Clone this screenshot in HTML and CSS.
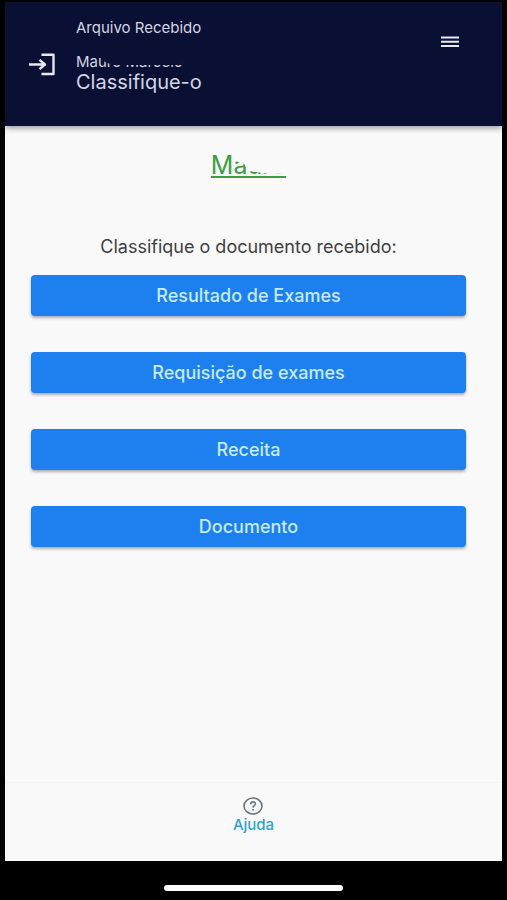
FILE: index.html
```html
<!DOCTYPE html>
<html lang="pt-BR">
<head>
<meta charset="utf-8">
<meta name="viewport" content="width=device-width, initial-scale=1">
<title>Arquivo Recebido</title>
<link rel="stylesheet" href="styles.css">
</head>
<body>
<div class="screen">
  <header class="topbar">
    <button class="icon-button" type="button" aria-label="Sair">
      <svg width="28" height="24" viewBox="0 0 28 24" fill="none" stroke="currentColor" stroke-width="2.400" stroke-linejoin="round"><path d="M1 12.500H16M11.500 7.800L17 12.500L11.500 17.200M13.500 2.800H25.500V22H13.500"/></svg>
    </button>
    <div class="heading">
      <p class="overline">Arquivo Recebido</p>
      <p class="owner">Mauro Marcelo</p>
      <h1 class="title">Classifique-o</h1>
    </div>
    <button class="icon-button menu" type="button" aria-label="Menu">
      <svg width="18" height="12" viewBox="0 0 18 12" fill="none" stroke="currentColor" stroke-width="2"><path d="M0 1.500H18M0 5.700H18M0 10H18"/></svg>
    </button>
  </header>
  <main class="content">
    <a class="patient" href="#paciente">Mauro</a>
    <p class="prompt">Classifique o documento recebido:</p>
    <div class="choices">
      <button class="choice" type="button">Resultado de Exames</button>
      <button class="choice" type="button">Requisição de exames</button>
      <button class="choice" type="button">Receita</button>
      <button class="choice" type="button">Documento</button>
    </div>
  </main>
  <footer class="bottombar">
    <a class="help" href="#ajuda">
      <svg width="20" height="18" viewBox="0 0 20 18" fill="none" stroke="currentColor" stroke-width="1.600"><ellipse cx="10" cy="9" rx="9" ry="8"/><path d="M7.700 7.200C7.700 4.100 12.500 4.200 12.400 7C12.300 8.600 10 8.800 10 10.700M10 12V13.500"/></svg>
      <span>Ajuda</span>
    </a>
  </footer>
</div>
<div class="home"><span class="home-indicator"></span></div>
</body>
</html>
```

FILE: styles.css
```css
* {
  box-sizing: border-box;
}

body {
  margin: 0;
  min-height: 100vh;
  padding: 2px 5px 0;
  display: flex;
  flex-direction: column;
  background: #000;
  font-family: Inter, "Liberation Sans", sans-serif;
}

p,
h1 {
  margin: 0;
}

.screen {
  flex: 1;
  display: flex;
  flex-direction: column;
  background: #f9f9f9;
}

.topbar {
  display: flex;
  align-items: flex-start;
  padding: 16px 43px 32px 20px;
  background: #0a1033;
  color: #d3d5e3;
  box-shadow: 0 2px 6px rgba(0, 0, 0, 0.4);
}

.icon-button {
  display: flex;
  margin: 34px 0 0;
  padding: 0 3px;
  border: 0;
  background: none;
  color: #e6e9f5;
}

.icon-button.menu {
  margin-top: 18px;
  padding: 0;
}

.heading {
  flex: 1;
  padding-left: 17px;
}

.overline,
.owner {
  font-size: 15px;
  line-height: 20px;
}

.owner {
  position: relative;
  width: fit-content;
  margin-top: 16px;
  line-height: 16px;
}

/* Hides most of the person's name */
.owner::after,
.patient::after {
  content: "";
  position: absolute;
  inset: 0;
}

.owner::after {
  background: #0a1033;
  clip-path: polygon(26% 0, 100% 0, 100% 68%, 34% 68%, 26% 45%);
}

.title {
  font-size: 20px;
  line-height: 24px;
  font-weight: 400;
}

.content {
  flex: 1;
  display: flex;
  flex-direction: column;
  padding: 24px 36px 24px 26px;
}

.patient {
  position: relative;
  align-self: center;
  color: #3a9f42;
  font-size: 25px;
  line-height: 30px;
  text-decoration: underline;
  text-decoration-thickness: 2px;
  text-underline-offset: 2px;
}

.patient::after {
  background: #f9f9f9;
  clip-path: polygon(30% 0, 100% 0, 100% 80%, 74% 78%, 50% 70%, 44% 46%, 30% 34%);
}

.prompt {
  margin: 55px 0 16px;
  color: #404040;
  font-size: 18px;
  line-height: 24px;
  text-align: center;
}

.choices {
  display: grid;
  gap: 36px;
}

.choice {
  height: 41px;
  padding: 0;
  border: 0;
  border-radius: 4px;
  background: #1e80ee;
  box-shadow: 0 2px 3px rgba(0, 0, 0, 0.3);
  color: #c6ebff;
  font: 500 18px/24px Inter, "Liberation Sans", sans-serif;
}

.bottombar {
  display: flex;
  justify-content: center;
  padding: 14px 0 26px;
  border-top: 1px solid #f4f4f4;
}

.help {
  display: flex;
  flex-direction: column;
  align-items: center;
  color: #2ca2d3;
  font-size: 15px;
  line-height: 20px;
  font-weight: 500;
  text-decoration: none;
}

.help svg {
  color: #69777c;
}

.home {
  height: 39px;
  display: flex;
  justify-content: center;
  align-items: flex-end;
  padding-bottom: 9px;
}

.home-indicator {
  width: 36%;
  height: 6px;
  border-radius: 3px;
  background: #fff;
}
```
